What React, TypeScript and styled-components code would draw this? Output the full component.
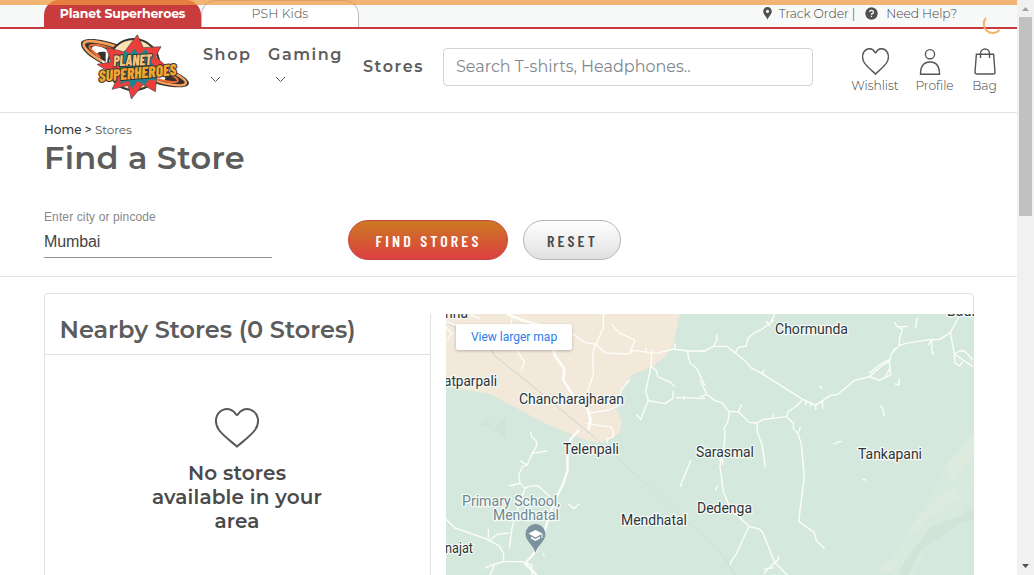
import React from 'react';
import styled, { createGlobalStyle } from 'styled-components';

const GlobalStyle = createGlobalStyle`
  * { box-sizing: border-box; }
  html, body { margin: 0; height: 100%; overflow: hidden; background: #fff; }
  h1, h2, p { margin: 0; }
  svg { display: block; }
`;

const brandFont = `Montserrat, Inter, 'Open Sans', sans-serif`;

const Frame = styled.div`
  display: flex;
  width: 1034px;
  height: 575px;
  overflow: hidden;
  position: relative;
  font-family: ${brandFont};
  color: #555;
`;
const Page = styled.div`
  width: 1017px;
  height: 575px;
  overflow: hidden;
`;
const Progress = styled.div`
  position: absolute;
  top: 0;
  left: 0;
  width: 1017px;
  height: 5px;
  background: rgba(240, 153, 62, 0.72);
`;
const Spinner = styled.svg`
  position: absolute;
  left: 982px;
  top: 13px;
`;

const TopBar = styled.div`
  display: flex;
  height: 29px;
  padding-left: 44px;
  background: #f8faf9;
  border-bottom: 2px solid #c53b3e;
`;
const Tab = styled.div<{ $active?: boolean }>`
  width: ${p => (p.$active ? 157 : 158)}px;
  height: 27px;
  border-radius: 15px 15px 0 0;
  border: ${p => (p.$active ? '0' : '1px solid #b9bcbc')};
  border-bottom: 0;
  background: ${p => (p.$active ? '#c83c3e' : '#fff')};
  color: ${p => (p.$active ? '#fff' : '#4a4a4a')};
  font-size: 12.5px;
  font-weight: ${p => (p.$active ? 700 : 300)};
  letter-spacing: ${p => (p.$active ? -0.2 : 0.05)}px;
  line-height: ${p => (p.$active ? 27 : 25)}px;
  text-align: center;
  white-space: nowrap;
`;
const TopLinks = styled.div`
  display: flex;
  align-items: center;
  height: 26px;
  margin-left: auto;
  padding-right: 60px;
  font-size: 12.3px;
  font-weight: 300;
  letter-spacing: -0.08px;
  color: #3e3e3e;
  white-space: nowrap;
`;
const HelpIcon = styled.svg`
  margin-left: 10px;
`;
const LinkText = styled.span<{ $gap: number }>`
  margin-left: ${p => p.$gap}px;
`;

const Header = styled.header`
  display: flex;
  height: 84px;
  padding-left: 75px;
  border-bottom: 1px solid #dee2e6;
`;
const Logo = styled.svg`
  margin-top: 1px;
  flex: none;
`;
const NavItem = styled.div<{ $left: number; $top: number; $w: number }>`
  width: ${p => p.$w}px;
  margin-left: ${p => p.$left}px;
  padding-top: ${p => p.$top}px;
  font-size: 16px;
  line-height: 20px;
  font-weight: 600;
  letter-spacing: 1.55px;
  color: #5c5c5c;
  white-space: nowrap;
  flex: none;
`;
const Chevron = styled.svg`
  margin: 11px 0 0 7px;
`;
const Search = styled.div`
  width: 370px;
  height: 38px;
  margin: 19px 0 0 20px;
  padding-left: 12px;
  border: 1px solid #ced4da;
  border-radius: 4px;
  font-size: 16px;
  font-weight: 400;
  line-height: 35px;
  color: #81888f;
  white-space: nowrap;
  flex: none;
`;
const Actions = styled.div`
  display: flex;
  gap: 16px;
  margin-left: 38px;
  padding-top: 19px;
`;
const Action = styled.div<{ $w: number }>`
  width: ${p => p.$w}px;
  display: flex;
  flex-direction: column;
  align-items: center;
  font-size: 12.3px;
  font-weight: 300;
  line-height: 18px;
  letter-spacing: -0.05px;
  color: #444;
  white-space: nowrap;
`;
const ActionIcon = styled.div<{ $shift?: number }>`
  height: 29px;
  padding-right: ${p => p.$shift ?? 0}px;
`;

const Intro = styled.section`
  height: 164px;
  padding: 9px 0 0 44px;
  border-bottom: 1px solid #e5e5e5;
`;
const Crumbs = styled.div`
  font-size: 12px;
  line-height: 16px;
  height: 16px;
  font-weight: 400;
  letter-spacing: -0.1px;
  b { font-weight: 500; color: #333; letter-spacing: 0.05px; }
`;
const Title = styled.h1`
  height: 40px;
  font-size: 32px;
  line-height: 40px;
  font-weight: 600;
  letter-spacing: 0.3px;
  color: #5c5c5c;
`;
const Form = styled.div`
  display: flex;
  margin-top: 29px;
`;
const Field = styled.label`
  width: 228px;
  height: 51px;
  border-bottom: 1px solid #949494;
  font-family: 'Liberation Sans', Arial, sans-serif;
`;
const FieldName = styled.div`
  margin-top: 3px;
  font-size: 12px;
  line-height: 14px;
  letter-spacing: 0.12px;
  color: #888;
`;
const FieldValue = styled.div`
  margin-top: 9px;
  font-size: 16px;
  line-height: 18px;
  letter-spacing: -0.1px;
  color: #444;
`;
const Button = styled.button<{ $primary?: boolean }>`
  width: ${p => (p.$primary ? 160 : 98)}px;
  height: 40px;
  margin: 13px 0 0 ${p => (p.$primary ? 76 : 15)}px;
  padding: 1px 0 0 1px;
  border: 1px solid ${p => (p.$primary ? '#c9443f' : '#b5b5b5')};
  border-radius: 20px;
  background: ${p => (p.$primary ? 'linear-gradient(#cc7a22, #dc3f42)' : 'linear-gradient(#fff, #e0e0e0)')};
  color: ${p => (p.$primary ? '#fff' : '#4a4a4a')};
  font-family: 'Barlow Condensed', 'Roboto Condensed', Roboto, sans-serif;
  font-size: 16px;
  font-weight: 600;
  letter-spacing: 3.15px;
  white-space: nowrap;
`;

const Card = styled.section`
  display: flex;
  width: 930px;
  height: 320px;
  margin: 16px 0 0 44px;
  padding-top: 20px;
  border: 1px solid #dfe2e4;
  border-radius: 4px;
`;
const Results = styled.div`
  width: 386px;
  border-right: 1px solid #dee2e6;
  flex: none;
`;
const ResultsTitle = styled.h2`
  height: 41px;
  padding-left: 14.5px;
  border-bottom: 1px solid #dee2e6;
  font-size: 24px;
  line-height: 32px;
  font-weight: 600;
  letter-spacing: 0;
  color: #5c5c5c;
  white-space: nowrap;
`;
const Empty = styled.div`
  display: flex;
  flex-direction: column;
  align-items: center;
  padding: 53px 1px 0 0;
`;
const EmptyText = styled.p`
  width: 190px;
  margin-top: 13px;
  font-size: 20px;
  font-weight: 600;
  line-height: 24px;
  letter-spacing: 0.15px;
  text-align: center;
  color: #4a4a4a;
`;
const MapPanel = styled.div`
  position: relative;
  width: 528px;
  margin-left: 15px;
  flex: none;
`;
const MapLink = styled.div`
  position: absolute;
  left: 10px;
  top: 10px;
  width: 116px;
  height: 26px;
  border-radius: 2px;
  background: #fff;
  box-shadow: 0 1px 3px rgba(0, 0, 0, 0.25);
  color: #2e7de9;
  font: 12px/26px Roboto, sans-serif;
  text-align: center;
`;

const Scrollbar = styled.div`
  display: flex;
  flex-direction: column;
  align-items: center;
  justify-content: space-between;
  width: 17px;
  background: #f1f1f1;
`;
const Thumb = styled.div`
  width: 13px;
  height: 199px;
  margin-bottom: auto;
  background: #c1c1c1;
`;

const Heart = ({ w, h, sw }: { w: number; h: number; sw: number }) => (
  <svg width={w} height={h} viewBox="0 0 44 40" preserveAspectRatio="none" fill="none" stroke="#585858" strokeWidth={sw}>
    <path d="M22 38.6C15 32.5 8 27.5 4 22C-1.5 14 .8 5 8 1.9C13.5-.2 18.5 2.2 21 6.3Q22 7.8 23 6.3C25.5 2.2 30.5-.2 36 1.9C43.2 5 45.5 14 40 22C36 27.5 29 32.5 22 38.6Z" />
  </svg>
);

const DownArrow = () => (
  <Chevron width="11" height="7" viewBox="0 0 11 7" fill="none" stroke="#555"><path d="M1 1L5.5 5.5L10 1" /></Chevron>
);

const BrandLogo = () => (
  <Logo width="120" height="72" viewBox="0 0 360 216">
    <g fill="#3a3230">
      <path d="M92 66C60 62 58 74 88 104C42 82 14 56 18 38C24 22 76 22 150 52L118 82C104 56 66 42 52 50C44 58 60 78 92 96Z" />
      <path d="M232 142C262 160 284 152 262 130C280 128 300 124 303 126C338 144 346 156 340 165C330 178 268 172 216 152Z" />
    </g>
    <g fill="none" strokeLinecap="round">
      <path d="M78 92C38 68 20 48 28 38C40 28 86 36 134 54" stroke="#f5a35c" strokeWidth="8" />
      <path d="M74 80C48 62 38 50 46 46C60 42 90 48 122 62" stroke="#ec6a36" strokeWidth="6" />
      <path d="M306 134C330 147 337 157 330 163C316 170 270 163 236 150" stroke="#f5a35c" strokeWidth="7" />
      <path d="M292 136C312 148 312 155 302 156C286 158 262 152 248 148" stroke="#ec6a36" strokeWidth="6" />
    </g>
    <circle cx="176" cy="104" r="77" fill="#fbe3b4" stroke="#333" strokeWidth="6" />
    <path d="M187 14L205 53L258 50L242 80L270 105L246 132L241 185L204 164L169 207L159 166L111 178L128 142L66 103L108 96L94 52L148 66Z" fill="#ee3e3b" stroke="#444" strokeWidth="2" />
    <path d="M148 61L164 72L179 56L192 74L212 57L221 75L238 77L228 94L249 128L240 151L219 151L211 166L187 153L171 178L160 153L135 162L144 130L119 90L143 87Z" fill="#1d858b" />
    <g fontFamily="'Barlow Condensed', 'Open Sans', sans-serif" fontWeight="800" fontStyle="italic" stroke="#333" strokeWidth="6" paintOrder="stroke" strokeLinejoin="round">
      <text x="114" y="107" fontSize="46" fill="#f6c67c" textLength="116" lengthAdjust="spacingAndGlyphs" transform="rotate(-2 170 90)">PLANET</text>
      <text x="70" y="146" fontSize="48" fill="#f2a62f" textLength="234" lengthAdjust="spacingAndGlyphs" transform="rotate(-5 185 125)">SUPERHEROES</text>
    </g>
  </Logo>
);

const places: [string, number, number, number][] = [
  ['nna', 445, 318, 23],
  ['atparpali', 444, 386, 53],
  ['Chancharajharan', 519, 404.4, 105],
  ['Telenpali', 563, 454.4, 56],
  ['Mendhatal', 621, 525.2, 66],
  ['Chormunda', 775, 334.2, 73],
  ['Badi', 947, 316, 28],
  ['Sarasmal', 696, 457.2, 58],
  ['Dedenga', 697, 513.2, 55],
  ['Tankapani', 858, 459.2, 64],
  ['najat', 445, 553.3, 28],
];

const StoreMap = () => (
  <svg width="528" height="261" viewBox="446 314 528 261">
    <rect x="446" y="314" width="528" height="261" fill="#d5e8dd" />
    <path d="M446 314H680L673 345L666 356L653 366L632 375L621 390L616 409L622 421L619 434L600 443L583 439L544 423L491 394L446 387Z" fill="#f3e9da" />
    <g fill="#dcebdd">
      <path d="M974 430L955 455L937 478L932 497L918 516L903 540L887 566L893 575H913L925 554L938 530L956 518L966 508L974 490Z" opacity=".5" />
      <path d="M974 434L963 446L944 468L951 481L961 472L974 455Z" />
      <path d="M955 487L942 495L931 508L915 521L906 535L918 530L929 517L943 509L961 499Z" />
      <path d="M882 563L900 557L892 572L877 571Z" />
    </g>
    <path d="M974 508L955 518L932 526L916 546L901 568L900 575H908L920 552L941 536L961 523L974 520Z" fill="#d0e4d8" />
    <path d="M480 426L487 417L492 427ZM494 429L505 417L507 440Z" fill="#d0e4d9" />
    <path d="M446 322L492 351L495 356L530 384L594 437" fill="none" stroke="#c9ccd6" strokeWidth=".9" />
    <path d="M594 437L620 460L700 533L724 557L735 575" fill="none" stroke="#ccd3d6" strokeWidth=".6" />
    <g transform="translate(435 285) scale(.33333)" fill="none" stroke="#fdfdfa" strokeWidth="4" strokeLinejoin="round">
      <path d="M505 87V130L482 178L473 205L475 270L455 325M410 145L450 172L482 178L512 204L582 207L600 165L555 145L530 118M582 207L595 196L665 205L715 192L760 198H810M632 188L635 203M720 175V192M650 195L648 245L632 320L640 347L690 356L713 340L715 318M650 245L665 258L668 275L708 293L720 305M632 320L640 345L617 404L604 388M757 198L765 235L785 250L810 302M722 338L810 340M748 332V346M245 195L269 232L258 257M232 95L228 118M33 125L50 145L37 165M105 90L135 100M33 110L60 120M583 285L558 317L552 362L520 375L458 385M455 415L530 427L532 435" />
      <path d="M216 87L260 105L335 125L360 212L388 252L385 285L410 325L457 370L467 405L460 435" strokeWidth="8" />
    </g>
    <g transform="translate(435 430) scale(.33333)" fill="none" stroke="#fdfdfa" strokeWidth="4" strokeLinejoin="round">
      <path d="M432 0L405 30L397 75L398 120L383 165L365 200L345 250L330 300L301 366L270 400L305 435" strokeWidth="7" />
      <path d="M287 5L290 20L304 34L305 48L292 70L276 105L256 92M292 70L337 63M276 105L262 110L251 135L255 160L270 175L282 169L308 167L345 199M222 168L255 160M270 175L262 200L240 260L230 300L223 355M33 268L60 294L150 325L192 347L206 370V395L170 405L150 415M206 395H260L290 405M165 330L187 313L222 309M160 325V296M178 405L165 435M290 402V435M400 221L417 236L433 221M768 90L736 167L741 170M325 370L328 378M517 40V28L535 20V0" />
    </g>
    <g transform="translate(700 285) scale(.33333)" fill="none" stroke="#fdfdfa" strokeWidth="4" strokeLinejoin="round">
      <path d="M224 87L213 110L188 131L158 147L144 160L138 183L115 187L106 204M197 108L211 125M203 120L222 105M0 199H12L40 184L51 165V148M40 184H80L106 204L138 230L152 248L186 266L308 343L347 361L390 332L414 328L462 287L508 275L545 243L568 228L575 205L597 182L618 175L688 164H718L751 143L778 93M597 182L600 155L608 132L592 126L583 111M592 126L625 124M651 98L647 131M580 195L587 190M508 275L537 286L555 278L570 250L568 228M508 265L545 235L568 224M555 278L572 270L570 250M751 143L763 207L819 245M763 207L779 198H793L819 224M763 207L765 235L779 243L788 230M695 164V190L699 210M695 164L684 181M308 343L293 360L265 380L259 395L188 404L172 414L148 412L115 380H88L65 353L45 347L20 328L0 285M20 328L0 336M115 380L125 358M88 380L84 410L70 435M172 414V435M259 395L280 415L281 435M219 385V397M317 347V360M333 350L330 365M347 358V375M367 350L369 372M186 266L193 254M358 303L367 311M585 297L597 300V281M539 363L546 366L554 394M301 425L298 435" />
    </g>
    <g transform="translate(700 430) scale(.33333)" fill="none" stroke="#fdfdfa" strokeWidth="4" strokeLinejoin="round">
      <path d="M75 0L73 45L65 80L60 110L70 185L92 238L147 289L178 297L188 307L224 397L262 435M147 289L107 375L92 397L90 405M237 378L235 388L192 430M192 418L222 413M170 0L187 47L196 112M283 0L293 8L300 0M293 8L304 42L313 140L300 240L297 275L342 307L350 333L374 356M400 41H408L412 36L426 34M488 148L498 150M52 167L48 182M58 90H68V105" />
    </g>
    <g fontFamily="Roboto, sans-serif" fontSize="14" fill="#303438" stroke="#f4faf6" strokeWidth="2.6" paintOrder="stroke" strokeLinejoin="round">
      {places.map(([name, x, y, w]) => (
        <text key={name} x={x} y={y} textLength={w} lengthAdjust="spacingAndGlyphs">{name}</text>
      ))}
      <g fill="#708590">
        <text x="462" y="506" textLength="98" lengthAdjust="spacingAndGlyphs">Primary School,</text>
        <text x="493" y="520" textLength="66" lengthAdjust="spacingAndGlyphs">Mendhatal</text>
      </g>
    </g>
    <path d="M535.5 553C534 546 525.5 541 525.5 534A10 10 0 0 1 545.5 534C545.5 541 537 546 535.5 553Z" fill="#7c929e" />
    <path d="M528.5 533.5L535.5 530L542.5 533.5L535.5 537.5ZM531 536.5L535.5 539L540 536.5V538.5L535.5 541L531 538.5ZM541.5 534H542.5V538H541.5Z" fill="#fff" />
  </svg>
);

export default function App() {
  return (
    <Frame>
      <GlobalStyle />
      <Page>
        <TopBar>
          <Tab $active>Planet Superheroes</Tab>
          <Tab>PSH Kids</Tab>
          <TopLinks>
            <svg width="9" height="13" viewBox="0 0 9 13">
              <path d="M4.5 12.8C3.5 9.5.2 7.8.2 4.3A4.3 4.3 0 0 1 8.8 4.3C8.8 7.8 5.5 9.5 4.5 12.8ZM4.5 2.7A1.6 1.6 0 1 0 4.5 5.9A1.6 1.6 0 1 0 4.5 2.7Z" fill="#505050" fillRule="evenodd" />
            </svg>
            <LinkText $gap={7}>Track Order |</LinkText>
            <HelpIcon width="13" height="13" viewBox="0 0 13 13">
              <circle cx="6.5" cy="6.5" r="6.2" fill="#505050" />
              <path d="M4.6 5A1.9 1.8 0 1 1 6.5 7V7.8M6.5 8.8V10" fill="none" stroke="#fff" strokeWidth="1.3" />
            </HelpIcon>
            <LinkText $gap={8}>Need Help?</LinkText>
          </TopLinks>
        </TopBar>
        <Header>
          <BrandLogo />
          <NavItem $left={8} $top={16} $w={50}>
            Shop
            <DownArrow />
          </NavItem>
          <NavItem $left={15} $top={16} $w={76}>
            Gaming
            <DownArrow />
          </NavItem>
          <NavItem $left={19} $top={28} $w={60}>Stores</NavItem>
          <Search>Search T-shirts, Headphones..</Search>
          <Actions>
            <Action $w={48}>
              <ActionIcon><Heart w={27} h={27} sw={2.3} /></ActionIcon>
              Wishlist
            </Action>
            <Action $w={39}>
              <ActionIcon $shift={9}>
                <svg width="22" height="28" viewBox="0 0 22 28" fill="none" stroke="#555" strokeWidth="1.4">
                  <circle cx="11" cy="6.2" r="4.6" />
                  <path d="M1.5 26.2C1.5 17.5 5 14 11 14S20.5 17.5 20.5 26.2Z" />
                </svg>
              </ActionIcon>
              Profile
            </Action>
            <Action $w={29}>
              <ActionIcon>
                <svg width="22" height="28" viewBox="0 0 22 28" fill="none" stroke="#555" strokeWidth="1.4">
                  <path d="M2.4 6.2H19.6L21 24Q21 26 19 26H3Q1 26 1 24ZM6.5 10V5.5A4.5 4.5 0 0 1 15.5 5.5V10" />
                </svg>
              </ActionIcon>
              Bag
            </Action>
          </Actions>
        </Header>
        <Intro>
          <Crumbs><b>Home &gt;</b> Stores</Crumbs>
          <Title>Find a Store</Title>
          <Form>
            <Field>
              <FieldName>Enter city or pincode</FieldName>
              <FieldValue>Mumbai</FieldValue>
            </Field>
            <Button $primary>FIND STORES</Button>
            <Button>RESET</Button>
          </Form>
        </Intro>
        <Card>
          <Results>
            <ResultsTitle>Nearby Stores (0 Stores)</ResultsTitle>
            <Empty>
              <Heart w={44} h={40} sw={2} />
              <EmptyText>No stores available in your area</EmptyText>
            </Empty>
          </Results>
          <MapPanel>
            <StoreMap />
            <MapLink>View larger map</MapLink>
          </MapPanel>
        </Card>
      </Page>
      <Scrollbar>
        <svg width="17" height="17" viewBox="0 0 17 17"><path d="M5 11L8.5 7L12 11Z" fill="#a3a3a3" /></svg>
        <Thumb />
        <svg width="17" height="17" viewBox="0 0 17 17"><path d="M5 6L8.5 10L12 6Z" fill="#505050" /></svg>
      </Scrollbar>
      <Progress />
      <Spinner width="22" height="22" viewBox="0 0 22 22" fill="none" stroke="#f3b26b" strokeWidth="2">
        <path d="M4 5A8 8 0 0 0 17.5 17" />
      </Spinner>
    </Frame>
  );
}
